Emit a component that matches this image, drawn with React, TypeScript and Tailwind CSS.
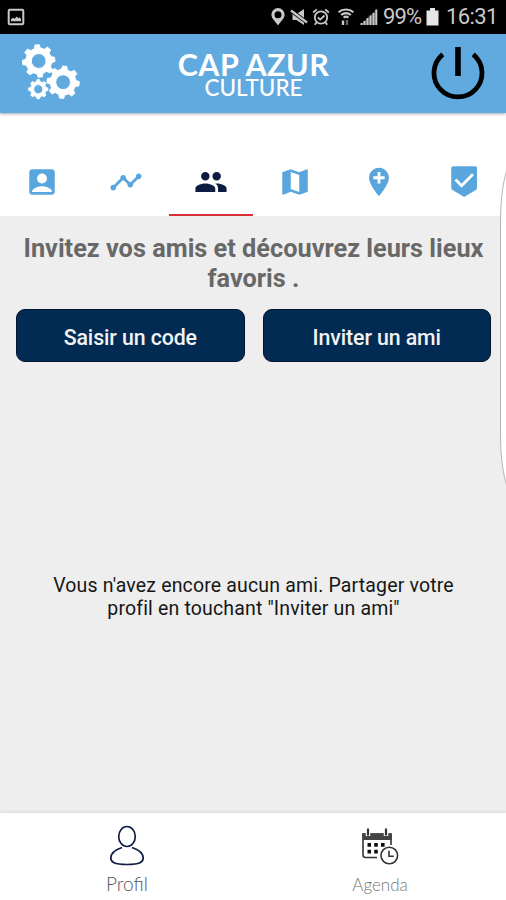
import {
  MdAccountBox,
  MdAddLocation,
  MdMap,
  MdPeople,
  MdTimeline,
} from "react-icons/md";

function VisitedIcon({ size }: { size: number }) {
  return (
    <svg width={size} height={size} viewBox="0 0 24 24" fill="currentColor">
      <path d="M4.5.8h15.400c.8 0 1.300.5 1.300 1.300V16.300c0 .5-.2.900-.6 1.200L12.100 22.600l-8.500-5.100c-.4-.3-.6-.7-.6-1.200V2.100C3 1.300 3.700.8 4.500.8z" />
      <path d="M6 10.300l4.300 4.300 8-8.100" fill="none" stroke="#fff" strokeWidth="2" />
    </svg>
  );
}

const TABS = [
  { id: "account", Icon: MdAccountBox },
  { id: "activity", Icon: MdTimeline },
  { id: "friends", Icon: MdPeople },
  { id: "map", Icon: MdMap },
  { id: "places", Icon: MdAddLocation },
  { id: "visited", Icon: VisitedIcon },
];

function gearPath(cx: number, cy: number, r: number, hole: number, turn: number) {
  const teeth = 8;
  const step = (Math.PI * 2) / teeth;
  const inner = r * 0.8;
  const points: string[] = [];
  const add = (radius: number, angle: number) =>
    points.push(`${(cx + radius * Math.cos(angle)).toFixed(2)} ${(cy + radius * Math.sin(angle)).toFixed(2)}`);
  for (let i = 0; i < teeth; i++) {
    const a = i * step + turn;
    add(inner, a - step * 0.29);
    add(r, a - step * 0.17);
    add(r, a + step * 0.17);
    add(inner, a + step * 0.29);
  }
  return `M${points.join("L")}ZM${cx - hole} ${cy}a${hole} ${hole} 0 1 0 ${hole * 2} 0a${hole} ${hole} 0 1 0 ${-hole * 2} 0Z`;
}

function Gears() {
  return (
    <svg className="-mt-1" width="60" height="58" viewBox="0 0 60 58" fill="#fff" stroke="#fff" strokeWidth="1" strokeLinejoin="round" fillRule="evenodd">
      <path d={gearPath(17.7, 18, 16.3, 7.4, -0.1)} />
      <path d={gearPath(42.1, 39.2, 16.2, 7.4, 0.1)} />
      <path d={gearPath(17.3, 46.2, 9.6, 4.6, 0)} />
    </svg>
  );
}

function StatusBar() {
  return (
    <div className="flex h-[34px] shrink-0 items-center bg-black pl-[7px] text-[#c9c9c9]">
      <svg width="18" height="18" viewBox="0 0 18 18">
        <rect x="1.7" y="1.7" width="14.6" height="14.6" rx="1.2" fill="none" stroke="currentColor" strokeWidth="2" />
        <path d="M4 13.3v-2l2.2-1.5 1.6 1 2-2.2 1.5 1.6 1.3-1 1.4 1.9v2.2z" fill="currentColor" />
      </svg>
      <div className="ml-auto flex items-center pr-[10px]">
        {/* Location */}
        <svg width="14" height="18" viewBox="0 0 14 18" fill="currentColor" fillRule="evenodd">
          <path d="M7 0a6.600 6.600 0 0 1 6.600 6.600C13.600 11 9.500 13.500 7 17.500 4.500 13.500.4 11 .4 6.600A6.600 6.600 0 0 1 7 0zm0 3.200a3.500 3.500 0 1 0 0 7 3.500 3.500 0 0 0 0-7z" />
        </svg>
        {/* Muted speaker */}
        <svg className="ml-[5px]" width="18" height="18" viewBox="0 0 18 18" fill="currentColor">
          <path d="M2.500 6H6.500L14 1v16l-7.500-5H2.500z" />
          <path d="M1 2.500 17 14.500" stroke="#000" strokeWidth="4" />
          <path d="M1 2.500 17 14.500" stroke="currentColor" strokeWidth="2.200" />
        </svg>
        {/* Alarm */}
        <svg className="ml-[4px]" width="18" height="18" viewBox="0 0 18 18" fill="none" stroke="currentColor" strokeWidth="1.8">
          <circle cx="9" cy="9.500" r="6.200" />
          <path d="M1.200 4.500 4.800 1.300M16.800 4.500 13.200 1.300M4.600 14.200 2.800 16.700M13.400 14.200l1.800 2.500M5.800 9.300l2.400 2.300 4.300-4.100" />
        </svg>
        {/* Wi-Fi with traffic arrows */}
        <svg className="ml-[7px]" width="18" height="18" viewBox="0 0 18 18" fill="none" stroke="currentColor" strokeWidth="2.2">
          <path d="M1.600 4.200c4-3.600 10.800-3.600 14.800 0M4.200 7c2.700-2.400 6.900-2.400 9.600 0M6.600 9.600c1.400-1.200 3.400-1.200 4.800 0" />
          <path d="M6 17v-4.500" strokeWidth="2.400" />
          <path d="M10 12v5" strokeWidth="2.400" opacity="0.5" />
        </svg>
        <svg className="ml-[4px]" width="19" height="18" viewBox="0 0 19 18">
          <path d="M18 1v16H1z" fill="currentColor" opacity="0.35" />
          <path d="M2.500 17v-2M5.500 17v-4M8.500 17v-7M11.500 17V7.500M14.500 17V5M17.300 17V1.500" stroke="currentColor" strokeWidth="2" />
        </svg>
        <span className="ml-[5px] w-[40px] whitespace-nowrap text-[22px] leading-none tracking-[-0.9px]">99%</span>
        <svg className="ml-[3px]" width="13" height="18" viewBox="0 0 13 18">
          <path d="M4 0h5v2.500h3.500V17.500H.5V2.500H4z" fill="#e6e6e6" />
        </svg>
        <span className="ml-[7px] w-[50px] whitespace-nowrap text-[22px] leading-none tracking-[-0.6px]">16:31</span>
      </div>
    </div>
  );
}

function Header() {
  return (
    <header className="z-10 flex h-[79px] shrink-0 items-center justify-between bg-[#61aadf] px-[21px] shadow-[0_1px_3px_rgba(0,0,0,0.35)]">
      <Gears />
      <div className="flex flex-col items-center pt-[2px] pr-[5px] text-white">
        <span className="font-[Lato] text-[30.5px] leading-[26px] font-bold tracking-[0.5px] whitespace-nowrap">CAP AZUR</span>
        <span className="font-[Lato] text-[22.5px] leading-[21px] font-medium whitespace-nowrap">CULTURE</span>
      </div>
      <svg className="-mt-[1px]" width="54" height="54" viewBox="0 0 54 54" fill="none" stroke="#000" strokeWidth="4.8">
        <path d="M11.800 8.400a24 24 0 1 0 30.400 0" />
        <path d="M27 1v29" strokeWidth="5.600" />
      </svg>
    </header>
  );
}

function ProfileIcon() {
  return (
    <svg width="36" height="42" viewBox="0 0 36 42" fill="none" stroke="#111d45" strokeWidth="1.7">
      <ellipse cx="18" cy="11.500" rx="8.300" ry="10" />
      <path d="M13 22.500c-6 2-11.200 4.500-11.200 10.500 0 4 3 6.500 16.200 6.500s16.200-2.500 16.200-6.500c0-6-5.200-8.500-11.200-10.500" />
    </svg>
  );
}

function AgendaIcon() {
  return (
    <svg width="38" height="38" viewBox="0 0 38 38" fill="none" stroke="#333" strokeWidth="1.6">
      <path d="M16 29.500H4.500a2.500 2.500 0 0 1-2.500-2.500V6h28v11" />
      <path d="M1.300 5.500H31V12H1.300z" fill="#444" stroke="none" />
      <path d="M7 1v7M25 1v7" stroke="#fff" strokeWidth="4.500" />
      <path d="M7 .5v7M25 .5v7" strokeWidth="2.200" />
      <path d="M6.500 15H10v3.800H6.500zM13.200 15h3.600v3.800h-3.600zM20 15h3.600v3.800H20zM6.500 21.800H10v3.800H6.500zM13.200 21.800h3.600v3.800h-3.600z" fill="#111" stroke="none" />
      <circle cx="28.300" cy="27.500" r="8.300" fill="#fff" />
      <path d="M28 22.800v5.400h4.800" />
    </svg>
  );
}

export default function App() {
  return (
    <div className="relative flex h-[900px] w-[506px] flex-col overflow-hidden bg-[#eee] font-[Roboto,sans-serif]">
      <StatusBar />
      <Header />

      <nav className="flex h-[103px] shrink-0 bg-white pt-[36px]">
        {TABS.map(({ id, Icon }) => (
          <button
            key={id}
            className={`flex flex-1 items-center justify-center border-b-[2px] ${
              id === "friends" ? "border-[#d93035] text-[#0c1c42]" : "border-transparent text-[#58a6dd]"
            }`}
          >
            <Icon size={34} />
          </button>
        ))}
      </nav>

      <main className="flex flex-1 flex-col px-4">
        <h1 className="mt-[18px] -mr-[1px] text-center text-[25.3px] leading-[30px] font-bold text-[#686868]">
          <span className="block whitespace-nowrap">Invitez vos amis et découvrez leurs lieux</span>
          <span className="block">favoris .</span>
        </h1>
        <div className="mt-[15px] -mr-[1px] flex gap-[18px] text-[21.3px] text-[#f2f2f2]">
          <button className="h-[53px] flex-1 rounded-[9px] border border-[#03142f] bg-[#022b54] pt-[4px] font-medium tracking-[-0.1px]">Saisir un code</button>
          <button className="h-[53px] flex-1 rounded-[9px] border border-[#03142f] bg-[#022b54] pt-[4px] font-medium tracking-[-0.1px]">Inviter un ami</button>
        </div>
        <p className="mt-[212px] pl-[1px] text-center text-[19.5px] leading-[23px] tracking-[0.16px] text-[#161616]">
          <span className="block whitespace-nowrap">Vous n'avez encore aucun ami. Partager votre</span>
          <span className="block">profil en touchant "Inviter un ami"</span>
        </p>
      </main>

      <footer className="flex h-[87px] shrink-0 bg-white font-[Lato] shadow-[0_-1px_3px_rgba(0,0,0,0.1)]">
        <button className="flex flex-1 flex-col items-center pt-[12px] pl-[1px] text-[#55555c]">
          <ProfileIcon />
          <span className="mt-[5px] text-[19px] leading-[24px] font-light">Profil</span>
        </button>
        <button className="flex flex-1 flex-col items-center pt-[15px] pl-[1px] text-[#777]">
          <AgendaIcon />
          <span className="mt-[7px] text-[17px] leading-[24px] font-light">Agenda</span>
        </button>
      </footer>

      {/* Edge panel handle over the right side */}
      <svg className="absolute top-[168px] right-0 z-20" width="7" height="320" viewBox="0 0 7 320">
        <path d="M8 1C4 15 1.500 30 1.500 55v210c0 25 2.500 40 6.500 54z" fill="#fff" stroke="#b5b5b5" strokeWidth="1" />
      </svg>
    </div>
  );
}
